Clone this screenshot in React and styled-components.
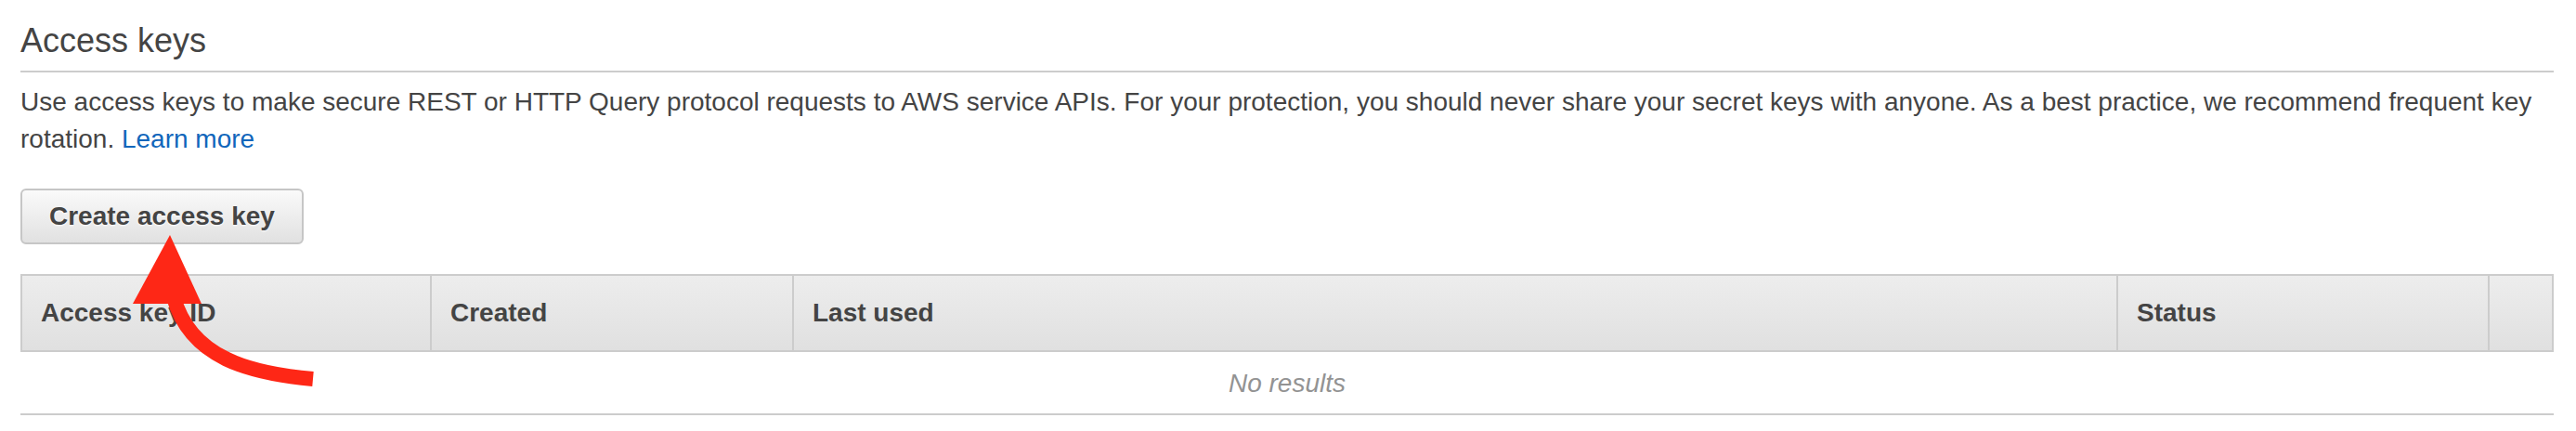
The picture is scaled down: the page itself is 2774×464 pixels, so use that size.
import React from "react";
import styled, { createGlobalStyle } from "styled-components";

const GlobalStyle = createGlobalStyle`
  html, body {
    margin: 0;
    padding: 0;
    background: #ffffff;
  }
  body {
    font-family: "Liberation Sans", Arial, Helvetica, sans-serif;
    color: #444444;
  }
  * {
    box-sizing: border-box;
  }
`;

const Page = styled.section`
  position: relative;
  padding: 0 24px 0 22px;
`;

const Heading = styled.h2`
  margin: 0;
  padding: 24px 0 12px;
  font-size: 36px;
  line-height: 40px;
  font-weight: 400;
  color: #444444;
  border-bottom: 2px solid #cccccc;
`;

const Description = styled.p`
  margin: 12px 0 0;
  font-size: 28px;
  line-height: 40px;
  color: #444444;
`;

const Phrase = styled.span`
  color: inherit;
`;

const Link = styled.a`
  color: #1166bb;
  text-decoration: none;
`;

const Actions = styled.div`
  display: flex;
  margin-top: 33px;
`;

const Button = styled.button`
  height: 60px;
  padding: 0 29px;
  border: 2px solid #c6c6c6;
  border-radius: 6px;
  background: linear-gradient(#fafafa, #e1e1e1);
  font-family: inherit;
  font-size: 28px;
  font-weight: 700;
  color: #444444;
  text-shadow: 0 1px 2px rgba(255, 255, 255, 0.95);
  cursor: pointer;
`;

const Table = styled.div`
  margin-top: 32px;
`;

const HeaderRow = styled.div`
  display: grid;
  grid-template-columns: 441px 390px 1fr 400px 71px;
`;

const HeaderCell = styled.div`
  height: 84px;
  display: flex;
  align-items: center;
  padding: 0 20px;
  border-top: 2px solid #cccccc;
  border-bottom: 2px solid #cccccc;
  border-left: 2px solid #cccccc;
  border-right: ${(p) => (p.$last ? "2px solid #cccccc" : "none")};
  background: linear-gradient(#ededed, #e0e0e0);
  font-size: 28px;
  font-weight: 700;
  color: #444444;
`;

const EmptyRow = styled.div`
  height: 68px;
  padding-top: 2px;
  border-bottom: 2px solid #cccccc;
  text-align: center;
  font-size: 28px;
  line-height: 64px;
  font-style: italic;
  color: #939393;
`;

const Annotation = styled.svg`
  position: absolute;
  top: 0;
  left: 0;
  pointer-events: none;
  overflow: visible;
`;

function RedArrow() {
  return (
    <Annotation width="400" height="464" viewBox="0 0 400 464">
      <path
        d="M337 408 C 270 402, 205 386, 187 320"
        fill="none"
        stroke="#fe2716"
        strokeWidth="16"
        strokeLinecap="butt"
      />
      <polygon points="183,253 143,327 217,327" fill="#fe2716" />
    </Annotation>
  );
}

const columns = ["Access key ID", "Created", "Last used", "Status", ""];

export default function App() {
  return (
    <>
      <GlobalStyle />
      <Page>
        <Heading>Access keys</Heading>
        <Description>
          <Phrase>
            Use access keys to make secure REST or HTTP Query protocol requests to AWS
            service APIs. For your protection, you should never share your secret keys
            with anyone. As a best practice, we recommend frequent key
          </Phrase>{" "}
          <Phrase>rotation.</Phrase> <Link href="#">Learn more</Link>
        </Description>
        <Actions>
          <Button type="button">Create access key</Button>
        </Actions>
        <Table>
          <HeaderRow>
            {columns.map((c, i) => (
              <HeaderCell key={i} $last={i === columns.length - 1}>
                {c}
              </HeaderCell>
            ))}
          </HeaderRow>
          <EmptyRow>No results</EmptyRow>
        </Table>
        <RedArrow />
      </Page>
    </>
  );
}
